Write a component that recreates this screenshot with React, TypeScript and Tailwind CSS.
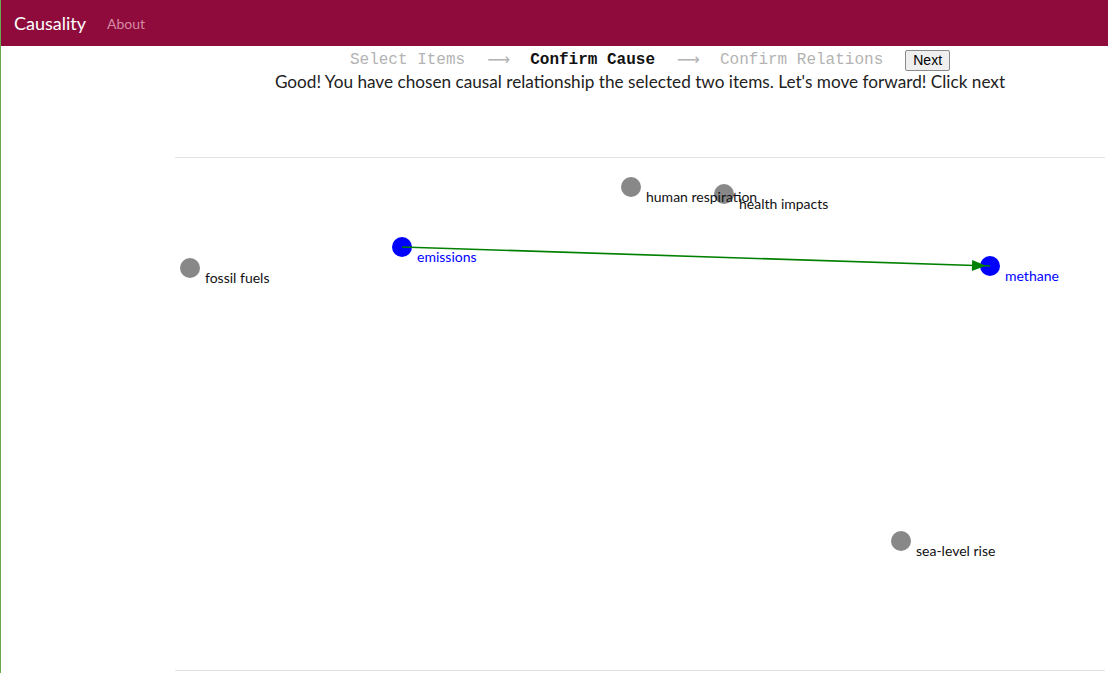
import React from 'react';

type Node = { id: string; x: number; y: number; selected?: boolean };

// positions on the canvas, relative to its top-left corner
const nodes: Node[] = [
  { id: 'fossil fuels', x: 15, y: 110 },
  { id: 'emissions', x: 227, y: 89, selected: true },
  { id: 'human respiration', x: 456, y: 29 },
  { id: 'health impacts', x: 549, y: 36 },
  { id: 'methane', x: 815, y: 108, selected: true },
  { id: 'sea-level rise', x: 726, y: 383 },
];

const Graph = () => {
  const from = nodes[1];
  const to = nodes[4];
  const angle = (Math.atan2(to.y - from.y, to.x - from.x) * 180) / Math.PI;
  const tipX = to.x - 4;
  const tipY = to.y - 4 * Math.tan((angle * Math.PI) / 180);

  return (
    <svg width={930} height={512} className="block">
      {nodes.map((n) => (
        <circle key={n.id} cx={n.x} cy={n.y} r={10} fill={n.selected ? '#0000ff' : '#888888'} />
      ))}
      {nodes.map((n) => (
        <text
          key={n.id}
          x={n.x + 15}
          y={n.y + 15}
          fontSize={14}
          fill={n.selected ? '#0000ff' : '#111111'}
          style={{ fontFamily: 'Lato, sans-serif' }}
        >
          {n.id}
        </text>
      ))}
      <line x1={from.x} y1={from.y} x2={to.x} y2={to.y} stroke="#008000" strokeWidth={1.6} />
      <g transform={`translate(${tipX}, ${tipY}) rotate(${angle})`}>
        <polygon points="0,0 -14,-5.5 -14,5.5" fill="#008000" />
      </g>
    </svg>
  );
};

const App = () => {
  return (
    <div className="min-h-screen bg-white border-l border-[#6aa84f] font-['Lato',sans-serif] text-[#222]">
      {/* Navbar */}
      <nav className="h-[46px] bg-[#8f0b3b] flex items-center pl-[13px]">
        <span className="text-white text-[18px]">Causality</span>
        <span className="ml-[21px] text-[14px] text-[#d58aa5]">About</span>
      </nav>

      <div className="flex">
        <div className="w-[174px] shrink-0" />
        <main className="w-[930px]">
          {/* Steps */}
          <div className="flex items-center justify-center gap-[22px] pl-[20px] pt-[2px] h-[26px] font-['Liberation_Mono',monospace] text-[16px]">
            <span className="text-[#b3b3b3]">Select Items</span>
            <span className="text-[#b3b3b3] font-['DejaVu_Sans',sans-serif] w-[21px] text-center">⟶</span>
            <span className="font-bold text-[#111]">Confirm Cause</span>
            <span className="text-[#b3b3b3] font-['DejaVu_Sans',sans-serif] w-[21px] text-center">⟶</span>
            <span className="text-[#b3b3b3]">Confirm Relations</span>
            <button className="h-[21px] px-[7px] bg-[#efefef] border border-[#8a8a8a] rounded-[2px] font-['Liberation_Sans',sans-serif] text-[14px] text-black leading-none">
              Next
            </button>
          </div>
          <p className="text-center text-[17.2px] leading-[24px] -mt-[2px] text-[#222]">
            Good! You have chosen causal relationship the selected two items. Let's move forward! Click next
          </p>

          <div className="mt-[63px] border-t border-b border-[#e3e3e3]">
            <Graph />
          </div>
        </main>
      </div>
    </div>
  );
};

export default App;
